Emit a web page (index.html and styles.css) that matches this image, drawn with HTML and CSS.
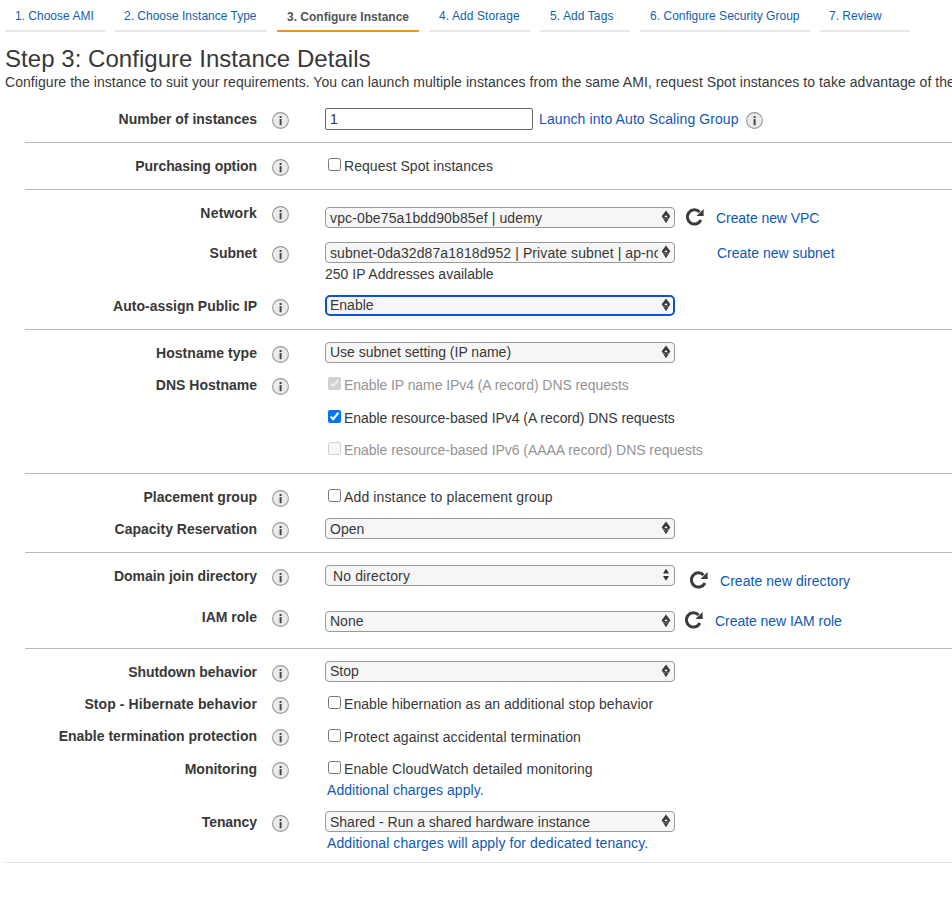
FILE: index.html
```html
<!DOCTYPE html>
<html lang="en">
<head>
<meta charset="utf-8">
<title>Configure Instance Details</title>
<link rel="stylesheet" href="styles.css">
</head>
<body>
<svg class="defs" aria-hidden="true">
  <symbol id="info" viewBox="0 0 17 17"><circle cx="8.5" cy="8.5" r="7.9" fill="#ebebeb" stroke="#999" stroke-width="1.1"/><path d="M7.6 3.9h2v2h-2zM7.6 7.1h2v6.2h-2z" fill="#484848"/></symbol>
  <symbol id="refresh" viewBox="0 0 18 18"><path d="M14.9 12A7.1 7.1 0 1 1 13.6 4" fill="none" stroke="#3c3c3c" stroke-width="3"/><path d="M17.6 .9v7.1h-7.1z" fill="#3c3c3c"/></symbol>
  <symbol id="diamond" viewBox="0 0 10 14"><path d="M5 .5L9.3 6.3 5 13.2.7 6.3z" fill="#3a3a3a"/><path d="M5 5.2L6.7 6.4 5 7.6 3.3 6.4z" fill="#f6f6f6"/><path d="M2.4 8l2.2 1.4M7.6 8L5.4 9.4" stroke="#bbb" stroke-width=".6"/></symbol>
  <symbol id="updown" viewBox="0 0 10 14"><path d="M5 .8L8 5.6H2zM5 12.8L8 8H2z" fill="#333"/></symbol>
</svg>
<nav class="tabs">
  <a class="tab t1"><span>1. Choose AMI</span></a>
  <a class="tab t2"><span>2. Choose Instance Type</span></a>
  <a class="tab t3 active"><span>3. Configure Instance</span></a>
  <a class="tab t4"><span class="wide">4. Add Storage</span></a>
  <a class="tab t5"><span class="wide">5. Add Tags</span></a>
  <a class="tab t6"><span>6. Configure Security Group</span></a>
  <a class="tab t7"><span>7. Review</span></a>
</nav>
<header>
  <h1>Step 3: Configure Instance Details</h1>
  <p class="intro">Configure the instance to suit your requirements. You can launch multiple instances from the same AMI, request Spot instances to take advantage of the</p>
</header>
<main>
  <section>
    <div class="row"><span class="label">Number of instances</span><svg class="info"><use href="#info"/></svg>
      <div class="controls"><div class="line count"><input class="number" type="text" value="1"><a class="scaling wide">Launch into Auto Scaling Group</a><svg class="info"><use href="#info"/></svg></div></div></div>
  </section>
  <section>
    <div class="row"><span class="label tight">Purchasing option</span><svg class="info"><use href="#info"/></svg>
      <div class="controls"><label class="check"><input type="checkbox"><span class="loose">Request Spot instances</span></label></div></div>
  </section>
  <section>
    <div class="row network"><span class="label widest">Network</span><svg class="info"><use href="#info"/></svg>
      <div class="controls"><div class="line low"><div class="select"><span class="wider">vpc-0be75a1bdd90b85ef | udemy</span><svg><use href="#diamond"/></svg></div><svg class="refresh"><use href="#refresh"/></svg><a class="tight">Create new VPC</a></div></div></div>
    <div class="row subnet"><span class="label">Subnet</span><svg class="info"><use href="#info"/></svg>
      <div class="controls"><div class="line"><div class="select"><span class="wide">subnet-0da32d87a1818d952 | Private subnet | ap-no</span><svg><use href="#diamond"/></svg></div><a class="subnet-link">Create new subnet</a></div><span class="available">250 IP Addresses available</span></div></div>
    <div class="row"><span class="label">Auto-assign Public IP</span><svg class="info"><use href="#info"/></svg>
      <div class="controls"><div class="line"><div class="select focused"><span>Enable</span><svg><use href="#diamond"/></svg></div></div></div></div>
  </section>
  <section>
    <div class="row compact"><span class="label loose">Hostname type</span><svg class="info"><use href="#info"/></svg>
      <div class="controls"><div class="line"><div class="select raised"><span>Use subnet setting (IP name)</span><svg><use href="#diamond"/></svg></div></div></div></div>
    <div class="row dns"><span class="label">DNS Hostname</span><svg class="info"><use href="#info"/></svg>
      <div class="controls">
        <label class="check disabled"><input type="checkbox" checked disabled><span class="tight">Enable IP name IPv4 (A record) DNS requests</span></label>
        <label class="check ipv4"><input type="checkbox" checked><span class="snug">Enable resource-based IPv4 (A record) DNS requests</span></label>
        <label class="check disabled ipv6"><input type="checkbox" disabled><span class="snug">Enable resource-based IPv6 (AAAA record) DNS requests</span></label>
      </div></div>
  </section>
  <section>
    <div class="row compact"><span class="label">Placement group</span><svg class="info"><use href="#info"/></svg>
      <div class="controls"><label class="check"><input type="checkbox"><span class="wider">Add instance to placement group</span></label></div></div>
    <div class="row"><span class="label">Capacity Reservation</span><svg class="info"><use href="#info"/></svg>
      <div class="controls"><div class="line"><div class="select"><span>Open</span><svg><use href="#diamond"/></svg></div></div></div></div>
  </section>
  <section>
    <div class="row tall"><span class="label snug">Domain join directory</span><svg class="info"><use href="#info"/></svg>
      <div class="controls"><div class="line directory"><div class="select"><span class="wider">No directory</span><svg><use href="#updown"/></svg></div><svg class="refresh"><use href="#refresh"/></svg><a class="loose">Create new directory</a></div></div></div>
    <div class="row tall"><span class="label">IAM role</span><svg class="info"><use href="#info"/></svg>
      <div class="controls"><div class="line low role"><div class="select raised"><span>None</span><svg><use href="#diamond"/></svg></div><svg class="refresh"><use href="#refresh"/></svg><a class="snug">Create new IAM role</a></div></div></div>
  </section>
  <section class="last">
    <div class="row compact"><span class="label tight">Shutdown behavior</span><svg class="info"><use href="#info"/></svg>
      <div class="controls"><div class="line"><div class="select raised"><span>Stop</span><svg><use href="#diamond"/></svg></div></div></div></div>
    <div class="row compact"><span class="label wide">Stop - Hibernate behavior</span><svg class="info"><use href="#info"/></svg>
      <div class="controls"><label class="check"><input type="checkbox"><span class="loose">Enable hibernation as an additional stop behavior</span></label></div></div>
    <div class="row"><span class="label">Enable termination protection</span><svg class="info"><use href="#info"/></svg>
      <div class="controls"><label class="check protect"><input type="checkbox"><span class="wide">Protect against accidental termination</span></label></div></div>
    <div class="row monitoring"><span class="label">Monitoring</span><svg class="info"><use href="#info"/></svg>
      <div class="controls"><label class="check"><input type="checkbox"><span class="wide">Enable CloudWatch detailed monitoring</span></label><a class="charges loose">Additional charges apply.</a></div></div>
    <div class="row tenancy"><span class="label tight">Tenancy</span><svg class="info"><use href="#info"/></svg>
      <div class="controls"><div class="line"><div class="select"><span>Shared - Run a shared hardware instance</span><svg><use href="#diamond"/></svg></div></div><a class="charges wide">Additional charges will apply for dedicated tenancy.</a></div></div>
  </section>
</main>
</body>
</html>
```
FILE: styles.css
```css
* { box-sizing: border-box; }
body { margin: 0; height: 901px; overflow: hidden; background: #fff; color: #383838; font: 14px/20px "Liberation Sans", Arial, sans-serif; }
a { color: #0f58b4; text-decoration: none; white-space: nowrap; }
svg { flex: none; }
.tight { letter-spacing: -.07px; }
.snug { letter-spacing: -.045px; }
.loose { letter-spacing: .05px; }
.wide { letter-spacing: .09px; }
.wider { letter-spacing: .13px; }
.widest { letter-spacing: .2px; }
.defs { display: none; }
.tabs { display: flex; gap: 10px; height: 32px; padding-left: 5px; }
.tab { flex: none; height: 32px; padding: 6px 0 0 10px; border-bottom: 2px solid #e8e8e8; color: #1460ae; font-size: 12px; }
.tab.active { padding-top: 7px; border-color: #ff8f13; color: #555; font-weight: bold; }
.t1 { width: 100px; }
.t2 { width: 152px; padding-left: 9px; }
.t3 { width: 142px; }
.t4 { width: 101px; }
.t5 { width: 90px; }
.t6 { width: 170px; letter-spacing: .03px; }
.t7 { width: 90px; padding-left: 9px; }
header { height: 64px; padding: 12px 0 0 5px; white-space: nowrap; overflow: hidden; }
h1 { margin: 0; font-size: 24px; line-height: 30px; font-weight: normal; letter-spacing: .04px; }
.intro { margin: -2px 0 0; letter-spacing: .055px; }
main { height: 767px; }
section { margin-left: 25px; padding-top: 13px; border-bottom: 1px solid #bbb; }
.last { margin-left: 5px; padding-left: 20px; border-color: #e4e4e4; }
.row { display: flex; height: 33px; }
.compact { height: 32px; }
.network { height: 40px; }
.subnet, .monitoring { height: 53px; }
.tall { height: 41px; }
.dns { height: 98px; }
.tenancy { height: 50px; }
.label { width: 232px; text-align: right; font-weight: bold; white-space: nowrap; }
.info { width: 17px; height: 17px; margin: 3px 0 0 15px; }
.controls { display: flex; flex-direction: column; align-items: flex-start; margin-left: 36px; white-space: nowrap; }
.line { display: flex; margin-top: -1px; }
.low { margin-top: 4px; }
.number { width: 208px; height: 22px; margin: 0; padding: 0 4px; border: 1px solid #666; border-radius: 2px; color: #383838; font: inherit; }
.scaling { margin: 1px 0 0 6px; }
.count .info { margin: 4px 0 0 7px; }
.select { display: flex; width: 350px; height: 21px; padding: 0 3px 0 4px; border: 1px solid #999; border-radius: 4px; background: #f6f6f6; line-height: 20px; }
.select span { width: 328px; margin-right: 3px; overflow: hidden; }
.select svg { width: 10px; height: 14px; margin-top: 2px; }
.raised { line-height: 18px; }
.focused { border: 2px solid #0b57c8; border-radius: 5px; padding: 0 2px 0 3px; line-height: 17px; }
.focused svg { margin-top: 1px; }
.refresh { width: 18px; height: 18px; margin: 1px 12px 0 11px; }
.line > .refresh + a { margin-top: 1px; }
.subnet-link { margin: 1px 0 0 42px; }
.available { margin-top: 1px; }
.directory .select span { padding-left: 3px; }
.directory .refresh { margin: 6px 12px 0 15px; }
.directory .refresh + a { margin-top: 6px; }
.role .refresh { margin: 0 12px 0 10px; }
.line.role > .refresh + a { margin-top: 0; }
.check { display: flex; height: 20px; }
.check input { width: 13px; height: 13px; margin: 2px 3px 0 3px; }
.disabled { color: #949494; }
.ipv4 { margin-top: 13px; }
.ipv6 { margin-top: 12px; }
.protect { margin-top: 1px; }
.charges { margin: 1px 0 0 2px; }
```
